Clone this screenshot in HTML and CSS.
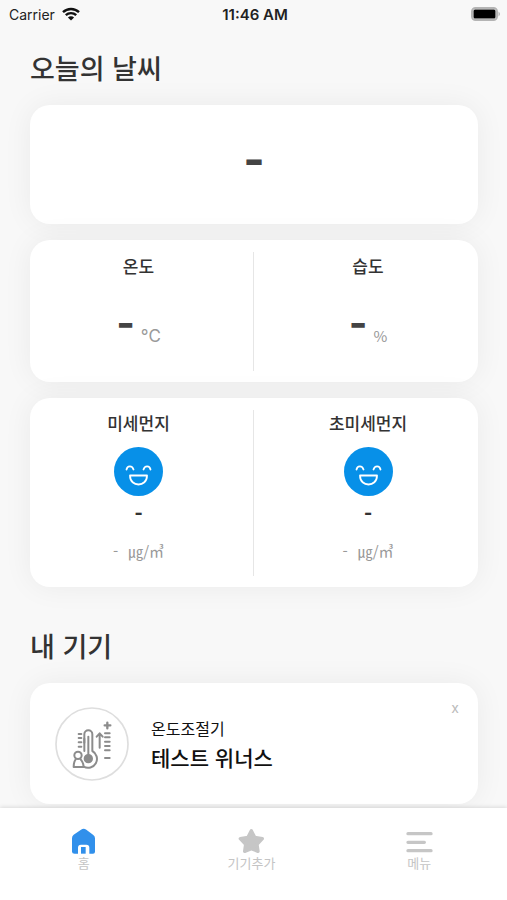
FILE: index.html
```html
<!DOCTYPE html>
<html lang="ko">
<head>
    <meta charset="UTF-8">
    <meta name="viewport" content="width=device-width, initial-scale=1.0">
    <title>오늘의 날씨</title>
    <link rel="stylesheet" href="styles.css">
</head>
<body>
    <header class="status">
        <div class="carrier">
            <span>Carrier</span>
            <svg class="wifi" viewBox="0 0 18 14" aria-hidden="true">
                <path d="M1 5.2a11.5 11.5 0 0 1 16 0M3.8 8.2a7.5 7.5 0 0 1 10.4 0" fill="none" stroke="#111" stroke-width="2.4"/>
                <path d="M9 13.6L5.9 10.6a4.4 4.4 0 0 1 6.2 0z" fill="#111"/>
            </svg>
        </div>
        <time class="clock">11:46 AM</time>
        <svg class="battery" viewBox="0 0 30 14" aria-hidden="true">
            <rect x="1" y="1" width="25" height="12" rx="3.5" fill="none" stroke="#b4b4b4" stroke-width="2"/>
            <rect x="2.5" y="2.5" width="22" height="9" rx="1.5" fill="#000"/>
            <path d="M27.5 4.5v5q3-2.5 0-5z" fill="#b4b4b4"/>
        </svg>
    </header>

    <main class="content">
        <h2 class="title">오늘의 날씨</h2>

        <section class="card summary">
            <span class="value large">-</span>
        </section>

        <section class="card split">
            <div class="cell">
                <h3>온도</h3>
                <p class="reading"><span class="value">-</span><span class="unit">°C</span></p>
            </div>
            <div class="cell">
                <h3>습도</h3>
                <p class="reading"><span class="value">-</span><span class="unit percent">%</span></p>
            </div>
        </section>

        <section class="card split dust">
            <div class="cell">
                <h3>미세먼지</h3>
                <svg class="face" viewBox="0 0 49 49" aria-hidden="true">
                    <circle cx="24.5" cy="24.5" r="24.5" fill="#0790e8"/>
                    <g fill="none" stroke="#fff" stroke-width="1.8" stroke-linecap="round" stroke-linejoin="round">
                        <path d="M12.5 22.5c.8-4.2 5.8-4.2 7 0M29.5 22.5c1.2-4.2 6.2-4.2 7 0"/>
                        <path d="M16 28.5h17c0 12-17 12-17 0z"/>
                    </g>
                </svg>
                <strong class="grade">-</strong>
                <p class="amount"><span>-</span><span>㎍/㎥</span></p>
            </div>
            <div class="cell">
                <h3>초미세먼지</h3>
                <svg class="face" viewBox="0 0 49 49" aria-hidden="true">
                    <circle cx="24.5" cy="24.5" r="24.5" fill="#0790e8"/>
                    <g fill="none" stroke="#fff" stroke-width="1.8" stroke-linecap="round" stroke-linejoin="round">
                        <path d="M12.5 22.5c.8-4.2 5.8-4.2 7 0M29.5 22.5c1.2-4.2 6.2-4.2 7 0"/>
                        <path d="M16 28.5h17c0 12-17 12-17 0z"/>
                    </g>
                </svg>
                <strong class="grade">-</strong>
                <p class="amount"><span>-</span><span>㎍/㎥</span></p>
            </div>
        </section>

        <h2 class="title devices">내 기기</h2>

        <section class="card device">
            <svg class="device-icon" viewBox="16 19 222 222" aria-hidden="true">
                <circle cx="127" cy="130" r="108" fill="#fff" stroke="#dedede" stroke-width="5"/>
                <g fill="none" stroke="#8c8c8c" stroke-width="6" stroke-linecap="round" stroke-linejoin="round">
                    <path d="M104 151V101a12 12 0 0 1 24 0v50a26 26 0 1 1-26 47"/>
                    <path d="M116 108v60"/>
                    <circle cx="116" cy="174" r="11" fill="#8c8c8c"/>
                    <path d="M87 100h8M87 112h8M87 125h8M87 138h8M104 114v12"/>
                    <path d="M150 141V100M141 108l9-10 9 10"/>
                    <path d="M173 66v17M165 74h17" stroke-width="7"/>
                    <path d="M166 98h14M166 110h14M166 123h14M166 136h14M166 149h14M166 172h14"/>
                    <circle cx="85" cy="164" r="11"/>
                    <path d="M78 176c-5 6-6 14-6 23h30c0-9-4-17-9-23"/>
                </g>
            </svg>
            <div class="device-text">
                <p class="kind">온도조절기</p>
                <p class="name">테스트 위너스</p>
            </div>
            <button class="remove" type="button">x</button>
        </section>
    </main>

    <nav class="tabs">
        <a class="tab" href="#home">
            <svg viewBox="213 114 81 78" aria-hidden="true">
                <path d="M219 145q0-7 5-11l22-15q8-5 16 0l20 15q6 4 6 11v40q0 6-6 6h-11v-18q0-9-9-9h-16q-9 0-9 9v18h-10q-8 0-8-6z" fill="#3190eb"/>
                <path d="M246 171h14v20h-14z" fill="#3190eb"/>
            </svg>
            <span>홈</span>
        </a>
        <a class="tab" href="#add">
            <svg viewBox="85 114 81 78" aria-hidden="true">
                <path d="M125 122l10 20 23 4-16 17 3 21-20-8-20 8 3-21-16-17 23-4z" fill="#c6c6c6" stroke="#c6c6c6" stroke-width="10" stroke-linejoin="round"/>
            </svg>
            <span>기기추가</span>
        </a>
        <a class="tab" href="#menu">
            <svg viewBox="585 114 81 78" aria-hidden="true">
                <path d="M591 131h69M591 157h49M591 182h69" fill="none" stroke="#c6c6c6" stroke-width="10" stroke-linecap="round"/>
            </svg>
            <span>메뉴</span>
        </a>
    </nav>
</body>
</html>
```
FILE: styles.css
```css
*{
    box-sizing: border-box;
}

body{
    margin: 0;
    min-height: 100vh;
    display: flex;
    flex-direction: column;
    background: #f8f8f8;
    color: #333;
    font-family: "Noto Sans CJK KR", "Noto Sans", sans-serif;
}

h2, h3, p{
    margin: 0;
}

.status{
    display: grid;
    grid-template-columns: 1fr auto 1fr;
    align-items: center;
    height: 28px;
    padding: 0 6px 0 9px;
    color: #222;
    font-family: Inter, sans-serif;
    font-size: 14px;
}

.carrier{
    display: flex;
    align-items: center;
    gap: 7px;
}

.wifi{
    width: 18px;
    height: 14px;
}

.clock{
    font-size: 15px;
    font-weight: 600;
}

.battery{
    width: 30px;
    height: 14px;
    justify-self: end;
}

.content{
    flex: 1;
    padding: 21px 29px 4px 30px;
}

.title{
    margin-bottom: 18px;
    font-size: 27px;
    font-weight: 500;
    line-height: 38px;
}

.devices{
    margin-top: 40px;
}

.card{
    background: #fff;
    border-radius: 20px;
    box-shadow: 0 0 30px rgba(0, 0, 0, 0.06);
}

.card + .card{
    margin-top: 16px;
}

.summary{
    display: flex;
    align-items: center;
    justify-content: center;
    height: 119px;
    padding-bottom: 12px;
}

.value{
    font-family: Inter, sans-serif;
    font-size: 40px;
    font-weight: 700;
    line-height: 44px;
    color: #444;
}

.large{
    font-size: 46px;
}

.split{
    display: grid;
    grid-template-columns: 1fr 1fr;
    padding: 12px 0 11px;
}

.cell{
    display: flex;
    flex-direction: column;
    align-items: center;
    min-height: 119px;
    padding-left: 4px;
}

.cell:first-child{
    padding: 0 6px 0 0;
    border-right: 1px solid #e6e6e6;
}

.cell h3{
    font-size: 17px;
    font-weight: 500;
    line-height: 28px;
}

.reading{
    display: flex;
    align-items: flex-end;
    gap: 6px;
    margin-top: 21px;
}

.unit{
    color: #999;
    font-family: Inter, sans-serif;
    font-size: 17px;
    line-height: 18px;
}

.percent{
    font-family: "Noto Sans CJK KR", sans-serif;
    font-size: 15px;
}

.dust .cell{
    min-height: 166px;
}

.dust h3{
    line-height: 26px;
}

.face{
    width: 49px;
    height: 49px;
    margin-top: 11px;
}

.grade{
    margin-top: 3px;
    font-size: 22px;
    font-weight: 700;
    line-height: 26px;
}

.amount{
    display: flex;
    gap: 10px;
    margin-top: 13px;
    color: #999;
    font-size: 15px;
    line-height: 26px;
}

.device{
    display: flex;
    align-items: center;
    gap: 22px;
    height: 121px;
    padding: 0 16px 0 25px;
}

.device-icon{
    width: 74px;
    height: 74px;
}

.device-text{
    flex: 1;
    color: #111;
}

.kind{
    font-size: 16px;
    line-height: 26px;
}

.name{
    font-size: 21px;
    font-weight: 500;
    line-height: 32px;
}

.remove{
    align-self: flex-start;
    margin-top: 16px;
    padding: 0 3px;
    border: 0;
    background: none;
    color: #bbb;
    font-family: Inter, sans-serif;
    font-size: 14px;
    line-height: 18px;
    cursor: pointer;
}

.tabs{
    position: sticky;
    bottom: 0;
    display: grid;
    grid-template-columns: repeat(3, 1fr);
    height: 92px;
    padding: 20px 4px 0 0;
    background: #fff;
    box-shadow: 0 -1px 4px rgba(0, 0, 0, 0.12);
}

.tab{
    display: flex;
    flex-direction: column;
    align-items: center;
    color: #c4c4c4;
    font-size: 13px;
    line-height: 18px;
    text-decoration: none;
}

.tab svg{
    width: 27px;
    height: 26px;
}
```
